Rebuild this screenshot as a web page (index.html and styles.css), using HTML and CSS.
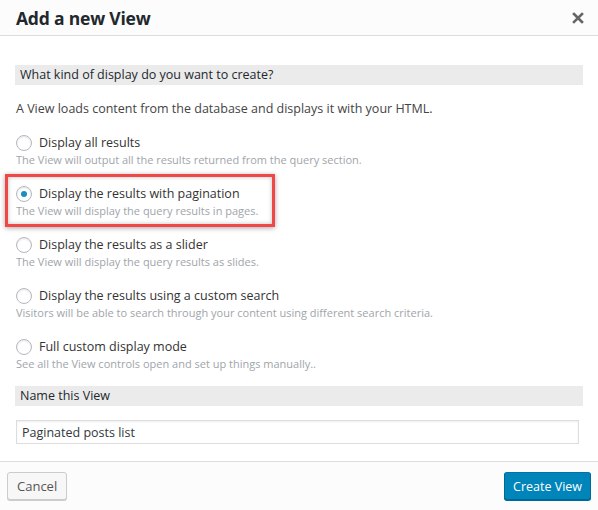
FILE: index.html
```html
<!DOCTYPE html>
<html lang="en">
<head>
<meta charset="utf-8">
<title>Add a new View</title>
<link rel="stylesheet" href="styles.css">
</head>
<body>
<div class="dialog">
  <header class="dlg-head">
    <h1 class="dlg-title">Add a new View</h1>
    <button class="close" aria-label="Close">
      <svg width="12" height="12" viewBox="0 0 12 12"><path d="M2 2 L10 10 M10 2 L2 10" stroke="#666" stroke-width="2.6" stroke-linecap="square"/></svg>
    </button>
  </header>
  <main class="dlg-body">
    <h2 class="section">What kind of display do you want to create?</h2>
    <p class="intro">A View loads content from the database and displays it with your HTML.</p>
    <ul class="options">
      <li class="option">
        <label class="opt-label"><span class="radio"></span>Display all results</label>
        <p class="desc">The View will output all the results returned from the query section.</p>
      </li>
      <li class="option selected">
        <label class="opt-label"><span class="radio checked"></span>Display the results with pagination</label>
        <p class="desc">The View will display the query results in pages.</p>
      </li>
      <li class="option">
        <label class="opt-label"><span class="radio"></span>Display the results as a slider</label>
        <p class="desc">The View will display the query results as slides.</p>
      </li>
      <li class="option">
        <label class="opt-label"><span class="radio"></span>Display the results using a custom search</label>
        <p class="desc">Visitors will be able to search through your content using different search criteria.</p>
      </li>
      <li class="option">
        <label class="opt-label"><span class="radio"></span>Full custom display mode</label>
        <p class="desc">See all the View controls open and set up things manually..</p>
      </li>
    </ul>
    <h2 class="section">Name this View</h2>
    <input class="name-input" type="text" value="Paginated posts list">
  </main>
  <footer class="dlg-foot">
    <button class="btn">Cancel</button>
    <button class="btn primary">Create View</button>
  </footer>
</div>
</body>
</html>
```
FILE: styles.css
```css
* { box-sizing: border-box; }
html, body { margin: 0; padding: 0; background: #fff; }
body {
  font-family: "Open Sans", "Noto Sans", sans-serif;
  color: #444;
  font-size: 12.5px;
  overflow: hidden;
}
.dialog { width: 598px; height: 510px; display: flex; flex-direction: column; }
.dlg-head {
  height: 36px;
  background: #fcfcfc;
  border-bottom: 1px solid #ddd;
  display: flex;
  align-items: center;
  justify-content: space-between;
  padding: 0 12px 0 16px;
}
.dlg-title { margin: 0; font-size: 17.5px; font-weight: 700; color: #23282d; letter-spacing: -0.2px; }
.close { border: 0; background: none; padding: 0; width: 16px; height: 16px; display: flex; align-items: center; justify-content: center; }
.dlg-body { flex: 1; padding: 29px 15px 0 15px; }
.section {
  margin: 0;
  height: 20px;
  line-height: 20px;
  background: #ebebeb;
  font-size: 12.5px;
  font-weight: 400;
  color: #23282d;
  padding: 0 5px;
}
.intro { margin: 15px 0 16px 1px; line-height: 18px; }
.options { list-style: none; margin: 0; padding: 0; }
.option { margin: 0 0 17px 1px; }
.option.selected {
  margin: -11px 0 9px -10px;
  padding: 8px 12px 5px 8px;
  border: 3px solid #f04747;
  width: 270px;
  box-shadow: 0 1px 5px rgba(0,0,0,0.35), inset 0 0 4px rgba(0,0,0,0.25);
}
.opt-label { display: flex; align-items: center; line-height: 18px; color: #333; }
.radio {
  width: 16px; height: 16px;
  border: 1px solid #b4b9be;
  border-radius: 50%;
  margin-right: 7px;
  background: #fff;
  box-shadow: inset 0 1px 2px rgba(0,0,0,0.1);
  display: flex; align-items: center; justify-content: center;
}
.radio.checked::after {
  content: "";
  width: 6px; height: 6px;
  border-radius: 50%;
  background: #1e8cbe;
}
.desc { margin: 0; line-height: 16px; font-size: 11px; color: #a0a5aa; }
.options + .section { margin-top: -3px; }
.name-input {
  display: block;
  margin: 14px 0 0 1px;
  width: 563px;
  height: 24px;
  border: 1px solid #ddd;
  box-shadow: inset 0 1px 2px rgba(0,0,0,0.07);
  font-family: inherit;
  font-size: 12.5px;
  color: #32373c;
  padding: 0 5px;
}
.dlg-foot {
  height: 49px;
  background: #fcfcfc;
  border-top: 1px solid #ddd;
  display: flex;
  justify-content: space-between;
  align-items: flex-start;
  padding: 10px 7px 0 7px;
}
.btn {
  height: 28px;
  padding: 0 9px;
  border: 1px solid #ccc;
  border-radius: 3px;
  background: #f7f7f7;
  box-shadow: 0 1px 0 #ccc;
  font-family: inherit;
  font-size: 13px;
  color: #555;
}
.btn.primary {
  padding: 0 8px;
  font-size: 12.5px;
  background: #0085ba;
  border-color: #0073aa #006799 #006799;
  box-shadow: 0 1px 0 #006799;
  color: #fff;
}
```
